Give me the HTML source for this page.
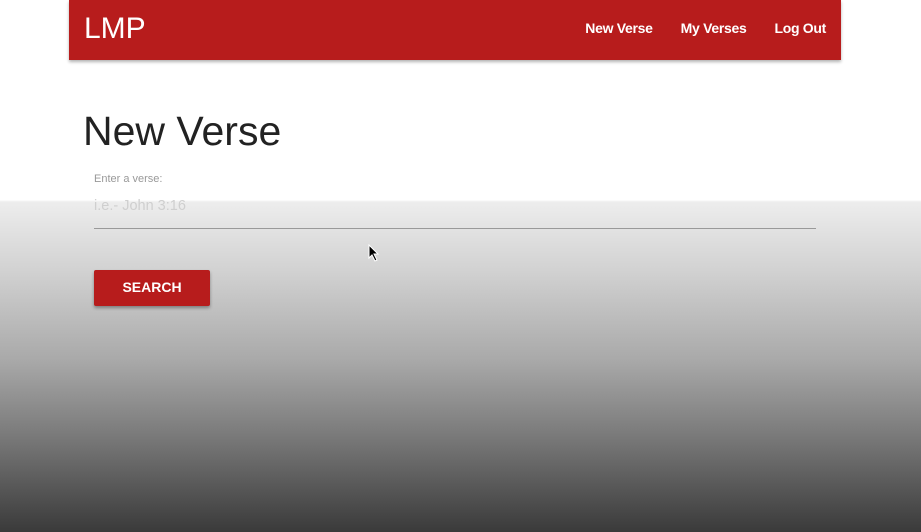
<!DOCTYPE html>
<html><head><meta charset="utf-8"><style>
html,body{margin:0;padding:0;width:921px;height:532px;overflow:hidden;font-family:"Liberation Sans",Arial,sans-serif}
body{background:linear-gradient(#fff 0,#fff 200px,#ededed 202px,#d2d2d2 270px,#a9a9a9 360px,#777 440px,#3a3a3a 532px)}
.nav{position:absolute;left:69px;top:0;width:772px;height:60px;background:#b71c1c;box-shadow:0 2px 3px rgba(0,0,0,.3)}
.logo{position:absolute;left:15px;top:12px;color:#fff;font-size:30px}
.links{position:absolute;right:15px;top:20px;color:#fff;font-size:14px;font-weight:600;letter-spacing:-.3px}
.links span{margin-left:28px}
h1{position:absolute;left:83px;top:108px;margin:0;font-weight:400;font-size:41px;color:#222}
.lab{position:absolute;left:94px;top:173px;font-size:11px;color:#999}
.ph{position:absolute;left:94px;top:198px;font-size:14.5px;color:#cfcfcf}
.line{position:absolute;left:94px;top:228px;width:722px;height:1px;background:#999}
.btn{position:absolute;left:94px;top:270px;width:116px;height:36px;background:#b71c1c;border-radius:2px;box-shadow:0 2px 3px rgba(0,0,0,.35);color:#fff;font-size:14px;font-weight:bold;text-align:center;line-height:34px}
</style></head><body>
<div class="nav"><div class="logo">LMP</div><div class="links"><span>New Verse</span><span>My Verses</span><span>Log Out</span></div></div>
<h1>New Verse</h1>
<div class="lab">Enter a verse:</div>
<div class="ph">i.e.- John 3:16</div>
<div class="line"></div>
<div class="btn">SEARCH</div>
<svg style="position:absolute;left:368px;top:244px" width="12" height="18"><path d="M1 1 L1 14 L4 11 L7 17 L9 16 L6 10 L10 10 Z" fill="#000" stroke="#fff" stroke-width="1"/></svg>
</body></html>
